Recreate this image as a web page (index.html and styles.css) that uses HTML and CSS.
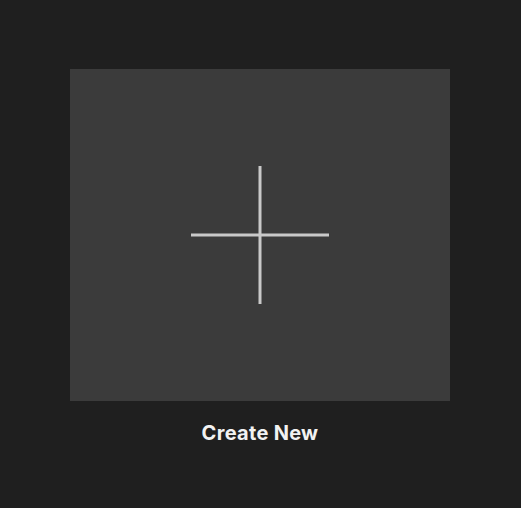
FILE: index.html
```html
<!DOCTYPE html>
<html>
<head>
<meta charset="utf-8">
<link rel="stylesheet" href="styles.css">
</head>
<body>
<div class="page">
  <div class="tile">
    <button class="card" aria-label="Create New">
      <svg class="plus" width="138" height="138" viewBox="0 0 138 138">
        <rect x="67.5" y="0" width="3" height="138" fill="#c9c9c9"/>
        <rect x="0" y="67.5" width="138" height="3" fill="#c9c9c9"/>
      </svg>
    </button>
    <div class="caption">Create New</div>
  </div>
</div>
</body>
</html>
```
FILE: styles.css
```css
html, body {
  margin: 0;
  padding: 0;
  background: #1f1f1f;
}
.page {
  padding: 69px 0 0 70px;
}
.tile {
  width: 380px;
  display: flex;
  flex-direction: column;
  align-items: center;
}
.card {
  width: 380px;
  height: 332px;
  background: #3b3b3b;
  border: 0;
  padding: 0;
  margin: 0;
  display: flex;
  align-items: center;
  justify-content: center;
}
.plus {
  display: block;
}
.caption {
  margin-top: 20px;
  font-family: Inter, "Noto Sans", sans-serif;
  font-weight: 700;
  font-size: 20px;
  letter-spacing: 0.3px;
  line-height: 24px;
  color: #f2f2f2;
}
```
